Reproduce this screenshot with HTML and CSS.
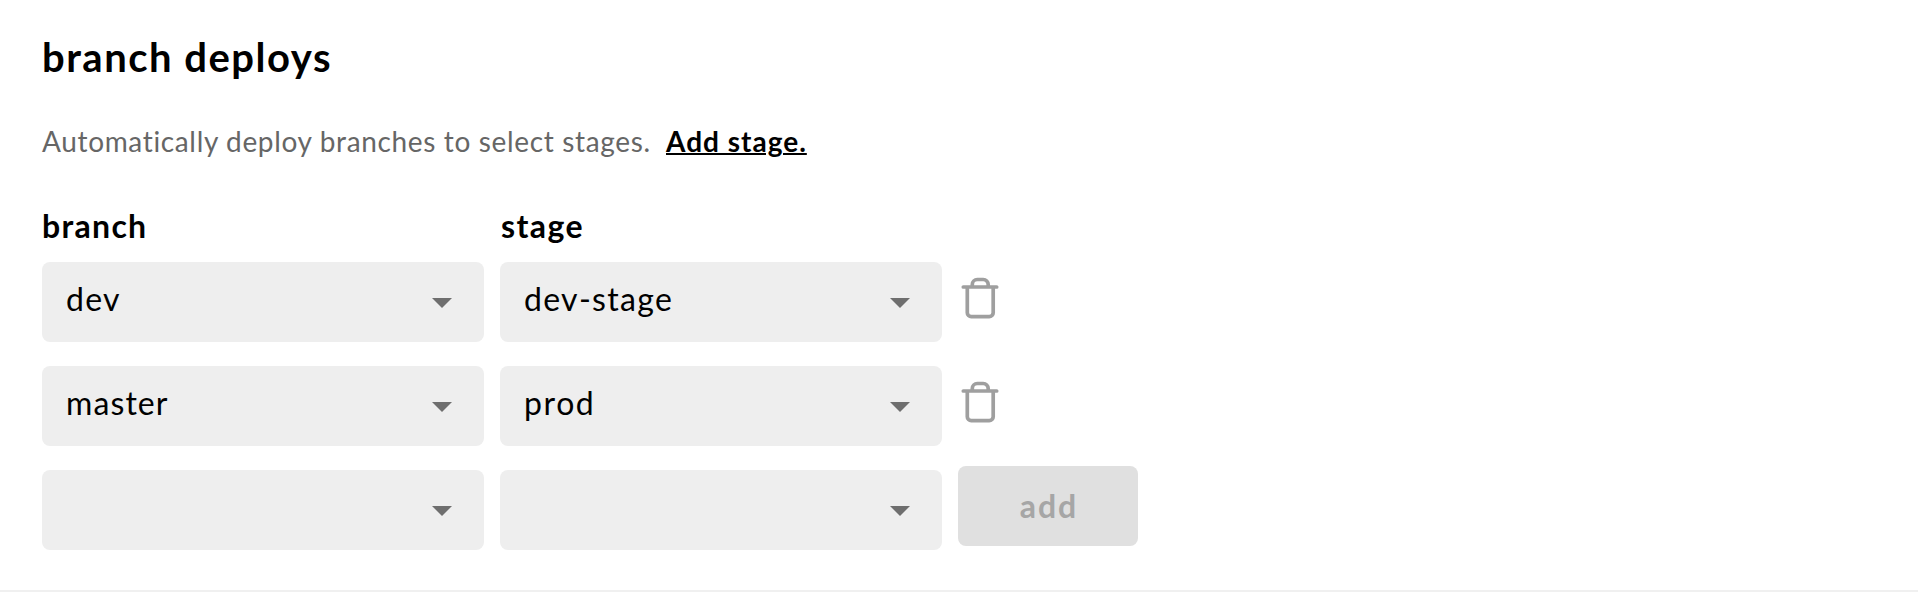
FILE: index.html
```html
<!DOCTYPE html>
<html lang="en">
<head>
<meta charset="utf-8">
<title>branch deploys</title>
<link rel="stylesheet" href="styles.css">
</head>
<body>
<section class="panel">
  <h2 class="title">branch deploys</h2>
  <p class="description"><span class="hint">Automatically deploy branches to select stages.</span><a class="add-stage" href="#">Add stage.</a></p>
  <div class="grid">
    <div class="label">branch</div>
    <div class="label label-stage">stage</div>
    <div></div>

    <div class="select"><span>dev</span><i class="caret"></i></div>
    <div class="select"><span>dev-stage</span><i class="caret"></i></div>
    <svg class="trash" viewBox="0 0 44 48"><path d="M5.3 13H38.7M9.3 13V38.7a4 4 0 0 0 4 4H31.200a4 4 0 0 0 4-4V13M14.300 13V10.500a5 5 0 0 1 5-5H25.200a5 5 0 0 1 5 5V13"/></svg>

    <div class="select"><span class="narrow">master</span><i class="caret"></i></div>
    <div class="select"><span class="wide">prod</span><i class="caret"></i></div>
    <svg class="trash" viewBox="0 0 44 48"><path d="M5.3 13H38.7M9.3 13V38.7a4 4 0 0 0 4 4H31.200a4 4 0 0 0 4-4V13M14.300 13V10.500a5 5 0 0 1 5-5H25.200a5 5 0 0 1 5 5V13"/></svg>

    <div class="select"><i class="caret"></i></div>
    <div class="select"><i class="caret"></i></div>
    <button class="add" disabled>add</button>
  </div>
</section>
</body>
</html>
```
FILE: styles.css
```css
* { box-sizing: border-box; }
body { margin: 0; background: #fff; color: #000; font-family: Lato, sans-serif; }
.panel { height: 592px; padding: 33px 42px 0; border-bottom: 2px solid #f0f0f0; overflow: hidden; }
.title { margin: 0; font-size: 40px; line-height: 48px; font-weight: 700; letter-spacing: 1.5px; }
.description { margin: 43px 0 0; display: flex; font-size: 28px; line-height: 34px; color: #666; white-space: nowrap; }
.hint { width: 624px; letter-spacing: 0.65px; }
.add-stage { color: #000; font-weight: 700; letter-spacing: 1px; text-decoration: underline; text-decoration-thickness: 2px; text-underline-offset: 1px; }
.grid { margin-top: 48px; display: grid; grid-template-columns: 442px 442px 180px; grid-template-rows: 32px 80px 80px 80px; gap: 24px 16px; }
.label { font-size: 32px; line-height: 40px; font-weight: 700; letter-spacing: 1.3px; }
.label-stage { padding-left: 1px; letter-spacing: 1.4px; }
.select { display: flex; justify-content: space-between; padding: 0 32px 0 24px; background: #eee; border-radius: 8px; font-size: 32px; line-height: 73px; letter-spacing: 1.3px; }
.narrow { letter-spacing: 1.1px; }
.wide { letter-spacing: 1.6px; }
.caret { width: 20px; height: 10px; margin: 36px 0 0 auto; background: #6e6e6e; clip-path: polygon(0 0, 100% 0, 50% 100%); }
.trash { width: 44px; height: 48px; margin-top: 12px; fill: none; stroke: #9f9f9f; stroke-width: 3.7; stroke-linecap: round; }
.add { width: 180px; height: 80px; margin-top: -4px; padding: 0 0 0 2px; border: 0; border-radius: 8px; background: #e0e0e0; color: #a6a6a6; font: 700 32px/80px Lato, sans-serif; letter-spacing: 2px; }
```
